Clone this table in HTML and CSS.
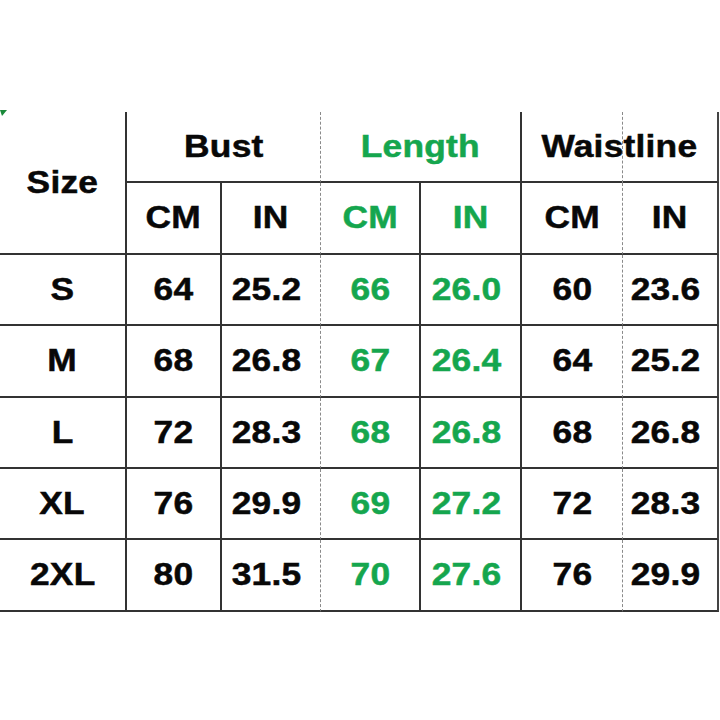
FILE: index.html
```html
<!DOCTYPE html>
<html>
<head>
<meta charset="utf-8">
<link rel="stylesheet" href="styles.css">
</head>
<body>
<div class="sheet">
  <svg class="tick" width="8" height="8" viewBox="0 0 8 8"><polygon points="0,0 7,0 2,6" fill="#1a8a3a"/></svg>
  <div class="chart">
    <div class="c size-h"><span class="t">Size</span></div>
    <div class="c grp dash"><span class="t">Bust</span></div>
    <div class="c grp green"><span class="t">Length</span></div>
    <div class="c grp last waist"><span class="t">Waistline</span></div>

    <div class="c"><span class="t">CM</span></div>
    <div class="c dash"><span class="t">IN</span></div>
    <div class="c green"><span class="t">CM</span></div>
    <div class="c green"><span class="t">IN</span></div>
    <div class="c dash"><span class="t">CM</span></div>
    <div class="c last"><span class="t">IN</span></div>

    <div class="c"><span class="t">S</span></div><div class="c"><span class="t">64</span></div><div class="c dash dec"><span class="t">25.2</span></div><div class="c green"><span class="t">66</span></div><div class="c green dec"><span class="t">26.0</span></div><div class="c dash"><span class="t">60</span></div><div class="c last dec"><span class="t">23.6</span></div>
    <div class="c"><span class="t">M</span></div><div class="c"><span class="t">68</span></div><div class="c dash dec"><span class="t">26.8</span></div><div class="c green"><span class="t">67</span></div><div class="c green dec"><span class="t">26.4</span></div><div class="c dash"><span class="t">64</span></div><div class="c last dec"><span class="t">25.2</span></div>
    <div class="c"><span class="t">L</span></div><div class="c"><span class="t">72</span></div><div class="c dash dec"><span class="t">28.3</span></div><div class="c green"><span class="t">68</span></div><div class="c green dec"><span class="t">26.8</span></div><div class="c dash"><span class="t">68</span></div><div class="c last dec"><span class="t">26.8</span></div>
    <div class="c"><span class="t">XL</span></div><div class="c"><span class="t">76</span></div><div class="c dash dec"><span class="t">29.9</span></div><div class="c green"><span class="t">69</span></div><div class="c green dec"><span class="t">27.2</span></div><div class="c dash"><span class="t">72</span></div><div class="c last dec"><span class="t">28.3</span></div>
    <div class="c"><span class="t">2XL</span></div><div class="c"><span class="t">80</span></div><div class="c dash dec"><span class="t">31.5</span></div><div class="c green"><span class="t">70</span></div><div class="c green dec"><span class="t">27.6</span></div><div class="c dash"><span class="t">76</span></div><div class="c last dec"><span class="t">29.9</span></div>
  </div>
</div>
</body>
</html>
```
FILE: styles.css
```css
html, body {
  margin: 0;
  padding: 0;
  background: #ffffff;
}
.sheet {
  position: relative;
  width: 720px;
  height: 720px;
  padding-top: 112px;
  box-sizing: border-box;
}
.tick {
  position: absolute;
  left: 0;
  top: 110px;
}
.chart {
  display: grid;
  grid-template-columns: 127px 95px 99px 100px 101px 101px 96px;
  grid-template-rows: 71px 72px 71px 72px 71px 71px 72px;
  width: 719px;
  font-family: "Liberation Sans", Arial, sans-serif;
  font-weight: bold;
  font-size: 31px;
  color: #080808;
}
.c {
  box-sizing: border-box;
  display: flex;
  align-items: center;
  justify-content: center;
  border-right: 2px solid #333;
  border-bottom: 2px solid #333;
}
.c.dec {
  padding-right: 8px;
}
.t {
  display: inline-block;
  transform: scaleX(1.14);
  letter-spacing: 0.2px;
  -webkit-text-stroke: 0.5px currentColor;
}
.c.dash {
  border-right: 1px dashed #8a8a8a;
}
.c.last {
  border-right: 2px solid #444;
}
.green {
  color: #15a64e;
}
.size-h {
  grid-row: span 2;
}
.grp {
  grid-column: span 2;
}
.waist {
  position: relative;
}
.waist::after {
  content: "";
  position: absolute;
  left: 100px;
  top: 0;
  bottom: -2px;
  border-left: 1px dashed #8a8a8a;
}
```
